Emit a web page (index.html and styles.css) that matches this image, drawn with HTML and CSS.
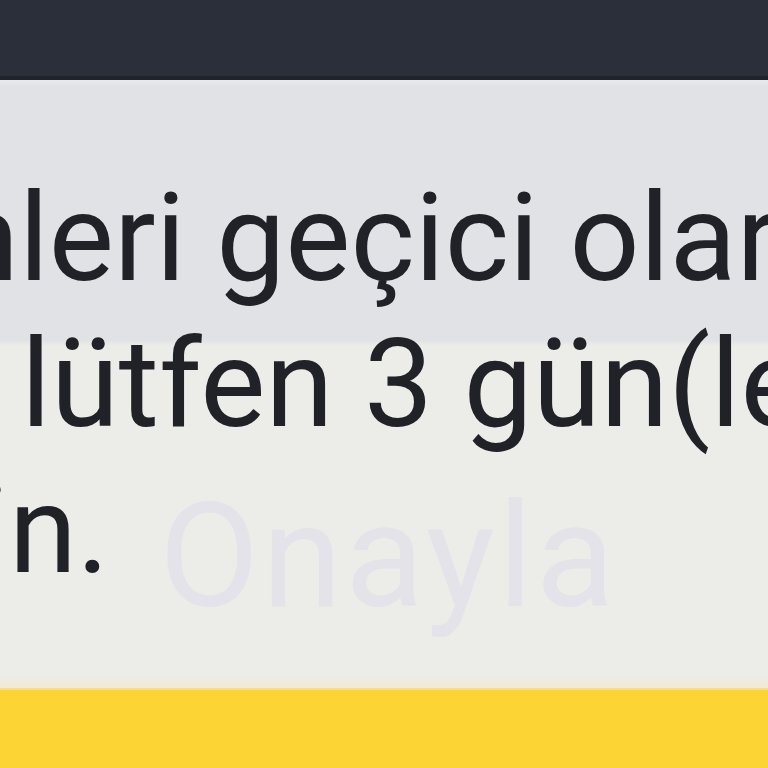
FILE: index.html
```html
<!DOCTYPE html>
<html lang="tr">
<head>
<meta charset="utf-8">
<title>Onayla</title>
<link rel="stylesheet" href="styles.css">
</head>
<body>
<div class="screen">
  <header class="topbar"></header>
  <main class="dialog">
    <div class="message">
      <div class="line line1">nleri geçici olar</div>
      <div class="line line2">lütfen 3 gün(le</div>
      <div class="line line3">
        <span class="tail">in.</span>
        <span class="ghost">Onayla</span>
      </div>
    </div>
  </main>
  <footer class="action"></footer>
</div>
</body>
</html>
```
FILE: styles.css
```css
html, body {
  margin: 0;
  padding: 0;
  width: 768px;
  height: 768px;
  overflow: hidden;
  background: #ecece8;
}

.screen {
  width: 768px;
  height: 768px;
  display: flex;
  flex-direction: column;
  overflow: hidden;
  font-family: Roboto, "Noto Sans", "Liberation Sans", sans-serif;
}

.topbar {
  height: 76px;
  flex: none;
  background: #2a2f3a;
  border-bottom: 4px solid #1f232b;
}

.dialog {
  flex: none;
  height: 608px;
  overflow: hidden;
  background: linear-gradient(#e8e9ec 0, #e1e2e6 8px, #e1e2e6 260px, #ecece8 266px, #ecece8 596px, #f3ead0 608px);
}

.message {
  padding-top: 85px;
  color: #202228;
  font-size: 123px;
  line-height: 146px;
  white-space: nowrap;
}

.line {
  height: 146px;
}

.line1 {
  margin-left: -49px;
}

.line2 {
  margin-left: 21px;
}

.line3 {
  display: flex;
  align-items: flex-start;
  margin-left: -21px;
}

.ghost {
  margin-left: 50px;
  margin-top: 27px;
  font-size: 145px;
  line-height: 145px;
  letter-spacing: 3px;
  color: #e3e3e9;
}

.action {
  flex: 1;
  background: #fcd535;
  border-top: 2px solid #fbe07a;
}
```
